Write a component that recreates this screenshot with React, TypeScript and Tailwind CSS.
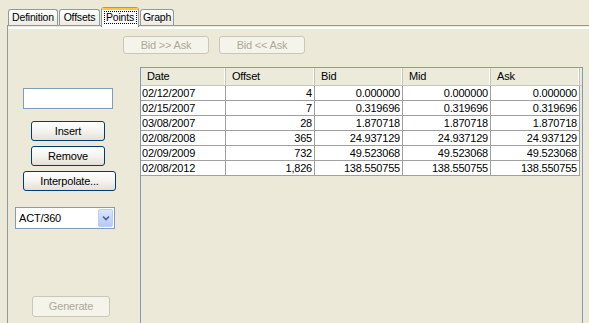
import React from "react";

const rows = [
  ["02/12/2007", "4", "0.000000", "0.000000", "0.000000"],
  ["02/15/2007", "7", "0.319696", "0.319696", "0.319696"],
  ["03/08/2007", "28", "1.870718", "1.870718", "1.870718"],
  ["02/08/2008", "365", "24.937129", "24.937129", "24.937129"],
  ["02/09/2009", "732", "49.523068", "49.523068", "49.523068"],
  ["02/08/2012", "1,826", "138.550755", "138.550755", "138.550755"],
];

const widths = ["w-[85px]", "w-[89px]", "w-[88px]", "w-[88px]", "w-[89px]"];
const headers = ["Date", "Offset", "Bid", "Mid", "Ask"];

function Tab({ label, w }: { label: string; w: string }) {
  return (
    <div
      className={`${w} h-[16px] border border-b-0 border-[#919b9c] rounded-t-[3px] bg-gradient-to-b from-white to-[#ecebe4] flex items-center justify-center leading-none text-[10.5px]`}
    >
      {label}
    </div>
  );
}

function XPButton({
  label,
  cls,
  disabled,
}: {
  label: string;
  cls: string;
  disabled?: boolean;
}) {
  return (
    <div
      className={
        disabled
          ? `${cls} border border-[#c9c7ba] rounded-[3px] bg-[#f5f4ea] text-[#aca899] flex items-center justify-center leading-none`
          : `${cls} border border-[#003c74] rounded-[3px] bg-gradient-to-b from-white via-[#f4f3ee] to-[#e3e1d6] text-black flex items-center justify-center leading-none`
      }
    >
      {label}
    </div>
  );
}

export default function App() {
  return (
    <div className="w-[589px] h-[323px] overflow-hidden bg-[#ece9d8] font-['Liberation_Sans',Arial,sans-serif] text-[11px] tracking-[-0.2px] text-black">
      {/* Tab strip */}
      <div className="h-[25px] pl-[8px] flex items-end gap-[1px]">
        <Tab label="Definition" w="w-[50px]" />
        <Tab label="Offsets" w="w-[41px]" />
        <div className="relative z-10 -mb-[2px] w-[38px] h-[20px] border-x border-[#919b9c] rounded-t-[3px] bg-[#fcfcfe] flex flex-col overflow-hidden">
          <div className="h-[1px] bg-[#e68b2c]" />
          <div className="h-[2px] bg-[#ffc83c]" />
          <div className="flex-1 flex items-start justify-center pt-[1px]">
            <span className="border border-dotted border-black w-[33px] h-[13px] flex items-center justify-center leading-none text-[10.5px]">
              Points
            </span>
          </div>
        </div>
        <Tab label="Graph" w="w-[34px]" />
      </div>

      {/* Tab pane */}
      <div className="ml-[7px] w-[620px] h-[320px] border-l border-t border-[#919b9c]">
        <div className="mt-px h-[2px] bg-white" />
        {/* Top buttons */}
        <div className="mt-[7px] pl-[115px] flex gap-[10px]">
          <XPButton label="Bid >> Ask" cls="w-[86px] h-[18px]" disabled />
          <XPButton label="Bid << Ask" cls="w-[86px] h-[18px]" disabled />
        </div>

        <div className="mt-[13px] flex">
          {/* Left column */}
          <div className="w-[132px] flex flex-col items-start">
            <div className="mt-[21px] ml-[15px] w-[90px] h-[21px] border border-[#7f9db9] bg-white" />
            <XPButton label="Insert" cls="mt-[12px] ml-[23px] w-[74px] h-[20px]" />
            <XPButton label="Remove" cls="mt-[5px] ml-[23px] w-[74px] h-[20px]" />
            <XPButton label="Interpolate..." cls="mt-[5px] ml-[15px] w-[93px] h-[20px]" />
            <div className="mt-[16px] ml-[7px] w-[100px] h-[22px] border border-[#7f9db9] bg-white flex items-center justify-between">
              <span className="pl-[3px] leading-none">ACT/360</span>
              <div className="mr-px w-[15px] h-[18px] rounded-[2px] border border-[#b9cdf5] bg-gradient-to-b from-[#dbe6fd] to-[#b4c9f6] flex items-center justify-center">
                <svg width="8" height="6" viewBox="0 0 8 6">
                  <path d="M1 1.5 L4 4.5 L7 1.5" fill="none" stroke="#4d6185" strokeWidth="1.6" />
                </svg>
              </div>
            </div>
            <XPButton label="Generate" cls="mt-[67px] ml-[24px] w-[78px] h-[21px]" disabled />
          </div>

          {/* Table frame */}
          <div className="w-[443px] h-[300px] border border-[#7f9db9] bg-[#ece9d8]">
            <div className="flex h-[18px] bg-[#ebeadb] border-b border-[#cbc7b8]">
              {headers.map((h, i) => (
                <div
                  key={h}
                  className={`${widths[i]} h-full flex items-center pl-[6px] border-r border-[#c7c5b2] shadow-[inset_-1px_0_0_#ffffff] leading-none`}
                >
                  {h}
                </div>
              ))}
            </div>
            {rows.map((r) => (
              <div key={r[0]} className="flex h-[15px]">
                {r.map((c, i) => (
                  <div
                    key={i}
                    className={`${widths[i]} h-full bg-white border-r border-b border-[#a0a0a0] flex items-center leading-none ${
                      i === 0 ? "pl-[1px]" : "justify-end pr-[2px]"
                    }`}
                  >
                    {c}
                  </div>
                ))}
              </div>
            ))}
          </div>
        </div>
      </div>
    </div>
  );
}
